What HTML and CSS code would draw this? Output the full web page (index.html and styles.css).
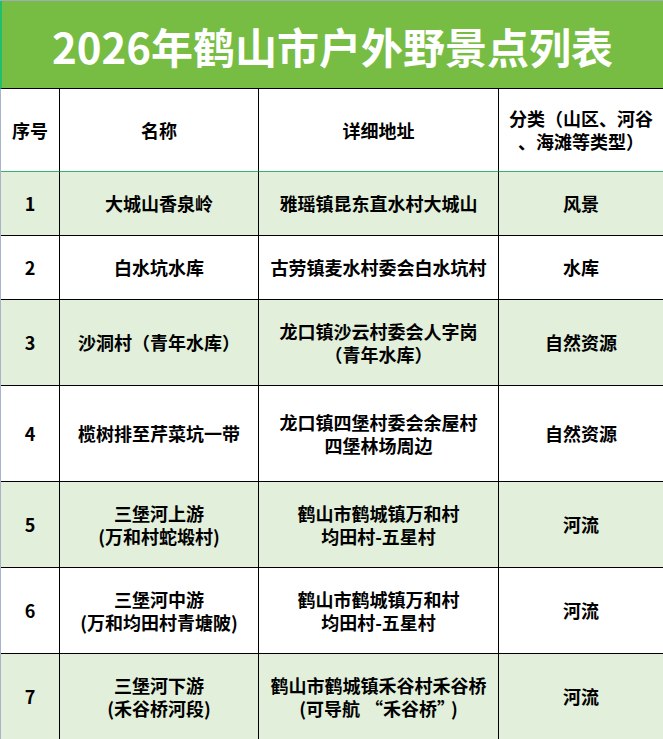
FILE: index.html
```html
<!DOCTYPE html>
<html lang="zh-CN">
<head>
<meta charset="utf-8">
<title>2026年鹤山市户外野景点列表</title>
<link rel="stylesheet" href="styles.css">
</head>
<body>
<div class="sheet">
  <div class="title">2026年鹤山市户外野景点列表</div>
  <div class="grid">
    <div class="cell head">序号</div>
    <div class="cell head">名称</div>
    <div class="cell head">详细地址</div>
    <div class="cell head">分类（山区、河谷<br>、海滩等类型）</div>

    <div class="cell r1 alt">1</div>
    <div class="cell r1 alt">大城山香泉岭</div>
    <div class="cell r1 alt">雅瑶镇昆东直水村大城山</div>
    <div class="cell r1 alt">风景</div>

    <div class="cell r2">2</div>
    <div class="cell r2">白水坑水库</div>
    <div class="cell r2">古劳镇麦水村委会白水坑村</div>
    <div class="cell r2">水库</div>

    <div class="cell r3 alt">3</div>
    <div class="cell r3 alt">沙洞村（青年水库）</div>
    <div class="cell r3 alt">龙口镇沙云村委会人字岗<br>（青年水库）</div>
    <div class="cell r3 alt">自然资源</div>

    <div class="cell r4">4</div>
    <div class="cell r4">榄树排至芹菜坑一带</div>
    <div class="cell r4">龙口镇四堡村委会余屋村<br>四堡林场周边</div>
    <div class="cell r4">自然资源</div>

    <div class="cell r5 alt">5</div>
    <div class="cell r5 alt">三堡河上游<br>(万和村蛇塅村)</div>
    <div class="cell r5 alt">鹤山市鹤城镇万和村<br>均田村-五星村</div>
    <div class="cell r5 alt">河流</div>

    <div class="cell r6">6</div>
    <div class="cell r6">三堡河中游<br>(万和均田村青塘陂)</div>
    <div class="cell r6">鹤山市鹤城镇万和村<br>均田村-五星村</div>
    <div class="cell r6">河流</div>

    <div class="cell r7 alt">7</div>
    <div class="cell r7 alt">三堡河下游<br>(禾谷桥河段)</div>
    <div class="cell r7 alt"><span class="txt">鹤山市鹤城镇禾谷村禾谷桥<br>(可导航<span class="q-open">“</span>禾谷桥<span class="q-close">”</span>)</span></div>
    <div class="cell r7 alt">河流</div>
  </div>
</div>
</body>
</html>
```
FILE: styles.css
```css
html, body {
  margin: 0;
  padding: 0;
  background: #ffffff;
}
body {
  width: 663px;
  height: 739px;
  overflow: hidden;
  font-family: "Noto Sans CJK SC", "Noto Sans", sans-serif;
}
.sheet {
  width: 663px;
  border-top: 1px solid #a3abbb;
}
.title {
  height: 88px;
  box-sizing: border-box;
  border-left: 2px solid #1fbf6e;
  border-bottom: 1px solid #000;
  background: #77bd43;
  color: #ffffff;
  font-weight: 700;
  font-size: 42px;
  line-height: 90px;
  text-align: center;
}
.grid {
  display: grid;
  grid-template-columns: 59px 199px 240px 164px;
  border-left: 1px solid #a9b4cc;
}
.cell {
  box-sizing: border-box;
  display: flex;
  align-items: center;
  justify-content: center;
  text-align: center;
  border-right: 1px solid #000;
  border-bottom: 1px solid #000;
  font-weight: 700;
  font-size: 18px;
  line-height: 23px;
  color: #000;
  background: #ffffff;
}
.cell:nth-child(4n) {
  border-right: none;
}
.txt {
  display: block;
}
.q-open {
  padding-left: 5px;
}
.q-close {
  padding-right: 5px;
}
.alt {
  background: #e2efda;
}
.head {
  height: 83px;
  border-bottom-color: #3aae74;
}
.r1 { height: 64px; }
.r2 { height: 64px; }
.r3 { height: 86px; }
.r4 { height: 96px; }
.r5 { height: 86px; }
.r6 { height: 86px; }
.r7 { height: 86px; }
```
